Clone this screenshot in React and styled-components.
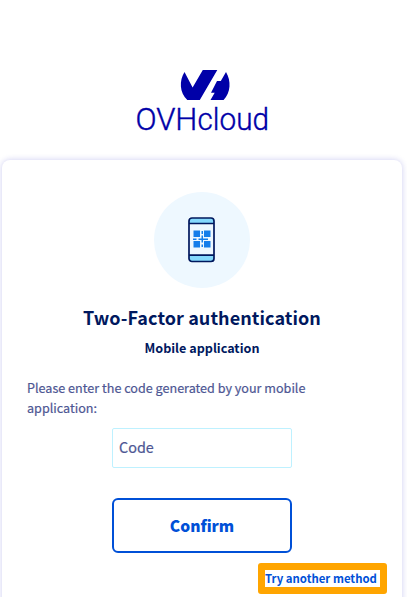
import React from "react";
import styled, { createGlobalStyle } from "styled-components";

const GlobalStyle = createGlobalStyle`
  * { box-sizing: border-box; }
  html, body { margin: 0; background: #fff; }
  body {
    height: 597px;
    overflow: hidden;
    font-family: "Noto Sans CJK SC", "Open Sans", sans-serif;
    color: #00185e;
  }
`;

const Page = styled.main`
  display: flex;
  flex-direction: column;
  width: 407px;
  height: 597px;
  overflow: hidden;
`;

const Header = styled.header`
  flex: none;
  height: 160px;
  padding: 66px 0 0 132px;
`;

const Logo = styled.svg`
  display: block;
  width: 140px;
  height: 76px;
  overflow: visible;
`;

const Card = styled.section`
  flex: none;
  display: flex;
  flex-direction: column;
  align-items: center;
  width: 400px;
  height: 450px;
  margin-left: 2px;
  padding: 32px 25px 0;
  border-radius: 8px;
  background: #fff;
  box-shadow: 0 0 6px rgba(0, 0, 185, 0.2);
`;

const Badge = styled.div`
  display: grid;
  place-items: center;
  width: 96px;
  height: 96px;
  border-radius: 50%;
  background: #eef8ff;
`;

const PhoneIcon = styled.svg`
  display: block;
  width: 28px;
  height: 46px;
`;

const Title = styled.h1`
  margin: 15px 0 0;
  font-size: 18px;
  line-height: 28px;
  letter-spacing: 0.08px;
  font-weight: 700;
  white-space: nowrap;
`;

const Subtitle = styled.h2`
  margin: 7px 0 0;
  font-size: 12.6px;
  line-height: 20px;
  font-weight: 700;
`;

const Instructions = styled.p`
  align-self: stretch;
  width: 300px;
  margin: 20px 0 0;
  font-size: 12.6px;
  line-height: 20px;
  font-weight: 400;
  color: #4d5693;
  -webkit-text-stroke: 0.2px #4d5693;
`;

const CodeInput = styled.input`
  width: 180px;
  height: 40px;
  margin: 10px 0 0;
  padding: 0 6px 3px;
  border: 1px solid #bef1ff;
  border-radius: 2px;
  background: #fff;
  font-family: inherit;
  font-size: 14.4px;
  color: #4d5693;
  outline: none;
  &::placeholder { color: #4d5693; opacity: 1; -webkit-text-stroke: 0.2px #4d5693; }
`;

const ConfirmButton = styled.button`
  width: 180px;
  height: 55px;
  margin: 30px 0 0;
  padding: 0 0 2px;
  border: 2px solid #0050d7;
  border-radius: 6px;
  background: #fff;
  font-family: inherit;
  font-size: 15.6px;
  font-weight: 900;
  color: #0050d7;
`;

const MethodLink = styled.a`
  align-self: flex-end;
  width: 129px;
  height: 31px;
  margin: 10px -10px 0 0;
  border: 7px solid #ffa500;
  border-radius: 3px;
  font-size: 11.4px;
  line-height: 16px;
  font-weight: 700;
  white-space: nowrap;
  color: #0050d7;
`;

function BrandLogo() {
  return (
    <Logo viewBox="132 66 140 76" role="img" aria-label="OVHcloud">
      <g fill="#0000a8">
        <path d="M184.500 72 L192.600 87.500 L202.800 70 H217.300 L199.800 100 H187.300 C179.500 92.500 179 81 184.500 72Z" />
        <path d="M226 72 C231.300 81 230.800 92.500 223.600 100 H210.500 L214.700 92.800 H211 L217 81 H220.800 Z" />
        <text
          y="130"
          fontFamily="Roboto, sans-serif"
          fontWeight="300"
          fontSize="31"
          stroke="#0000a8"
          strokeWidth="0.400"
        >
          <tspan x="135.400" textLength="62" lengthAdjust="spacingAndGlyphs">OVH</tspan>
          <tspan x="197.500" textLength="71.500" lengthAdjust="spacingAndGlyphs">cloud</tspan>
        </text>
      </g>
    </Logo>
  );
}

function Phone() {
  return (
    <PhoneIcon viewBox="0 0.500 28 46" aria-hidden="true">
      <rect x="1" y="1.500" width="25" height="43.500" rx="3" fill="#eef8ff" />
      <path d="M1 7V4.500a3 3 0 0 1 3-3h19a3 3 0 0 1 3 3V7zM1 39v3a3 3 0 0 0 3 3h19a3 3 0 0 0 3-3v-3z" fill="#85d9fd" />
      <path d="M1 7h25M1 38.700h25" stroke="#00185e" strokeWidth="1.700" />
      <rect x="1" y="1.500" width="25" height="43.500" rx="3" fill="none" stroke="#00185e" strokeWidth="1.700" />
      <path d="M5.500 14h6.500v6.500H5.500zM16 14h6.500v6.500H16zM5.500 24.500H12V31H5.500zM16 24.500h6.500V31H16zM13.500 14.500h1.500v3h-1.500zM13.500 19H15v3h5v1.500h-5V26h-1.500v-2.500h-3V22h3zM5 22h3.500v1.500H5zM13.500 28H15v2.500h-1.500z" fill="#157eea" />
    </PhoneIcon>
  );
}

export default function App() {
  return (
    <>
      <GlobalStyle />
      <Page>
        <Header><BrandLogo /></Header>
        <Card>
          <Badge><Phone /></Badge>
          <Title>Two-Factor authentication</Title>
          <Subtitle>Mobile application</Subtitle>
          <Instructions>Please enter the code generated by your mobile application:</Instructions>
          <CodeInput placeholder="Code" aria-label="Code" />
          <ConfirmButton type="button">Confirm</ConfirmButton>
          <MethodLink>Try another method</MethodLink>
        </Card>
      </Page>
    </>
  );
}
